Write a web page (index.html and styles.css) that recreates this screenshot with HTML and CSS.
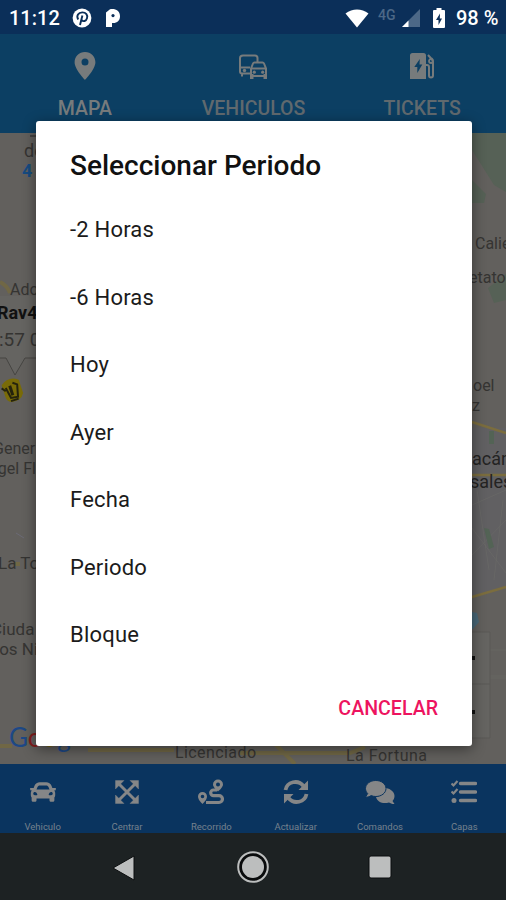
FILE: index.html
```html
<!DOCTYPE html>
<html lang="es">
<head>
<meta charset="utf-8">
<title>Mapa</title>
<link rel="stylesheet" href="styles.css">
</head>
<body>
<div class="screen">
  <header class="status">
    <div class="status-left">
      <span class="clock">11:12</span>
      <svg class="pin-logo" viewBox="0 0 20 20"><circle cx="10" cy="10" r="9.4" fill="#fff"/><path d="M6.2 11.5C4 7.8 6.4 4.4 10.3 4.4c3.7 0 5.7 2.8 4.7 5.8-.9 3-3.9 3.8-5.2 1.9M10.4 7.6 8 17" fill="none" stroke="#0b2f59" stroke-width="1.9"/></svg>
      <svg class="p-logo" viewBox="0 0 16 20"><path d="M1 4.500 5 1.300C10 .2 15 2.600 15 8.200c0 5-3.600 7.300-8 6.700v4.100H1z" fill="#fff"/><circle cx="8" cy="7.600" r="1.600" fill="#0b2f59"/></svg>
    </div>
    <div class="status-right">
      <svg class="wifi" viewBox="0 0 24 19"><path d="M.5 4.500C7.500-1 16.500-1 23.500 4.500L12 18.500z" fill="#fff"/></svg>
      <span class="net">4G</span>
      <svg class="signal" viewBox="0 0 18 18"><path d="M18 0v18H0z" fill="#4c6887"/><path d="M6.500 11.500V18H0z" fill="#fff"/></svg>
      <svg class="battery" viewBox="0 0 12 20"><path d="M3.500 0h5v2H11q1 0 1 1v16q0 1-1 1H1q-1 0-1-1V3q0-1 1-1h2.500z" fill="#fff"/><path d="M7 5.500 3 12h2.500v5L9 10.500H6.800z" fill="#0b2f59"/></svg>
      <span class="percent">98 %</span>
    </div>
  </header>

  <nav class="tabs">
    <div class="tab active">
      <svg viewBox="0 0 30 30"><path d="M15 1C9 1 4.600 5.500 4.600 11.300 4.600 18.500 15 29 15 29s10.400-10.500 10.400-17.700C25.400 5.500 21 1 15 1zm0 6.600a3.500 3.500 0 1 1 0 7 3.500 3.500 0 0 1 0-7z" fill="currentColor" fill-rule="evenodd"/></svg>
      <span>MAPA</span>
    </div>
    <div class="tab">
      <svg viewBox="0 0 30 30"><g fill="none" stroke="currentColor" stroke-width="2"><path d="M12 22.500H4q-2 0-2-2V7q0-2.500 3-2.500h12q2.500 0 2.500 2.500v4M2 16.500h10M4 23v2.500"/><path d="m13 17.500 2-5q.4-1 1.500-1h8q1.100 0 1.500 1l2 5v7.500H13zM13 17.500h15"/></g><g fill="currentColor"><circle cx="6.500" cy="19.500" r="1.700"/><circle cx="16.300" cy="21.200" r="1.600"/><circle cx="24.700" cy="21.200" r="1.600"/><path d="M12 23h3.500v5H12zm13.500 0H29v5h-3.500z"/></g></svg>
      <span>VEHICULOS</span>
    </div>
    <div class="tab">
      <svg viewBox="0 0 30 30"><path d="M5.500 2h11Q19 2 19 4.500V28H3V4.500Q3 2 5.500 2zM12.800 8 7.300 16h3v6l5-8.500h-2.800z" fill="currentColor" fill-rule="evenodd"/><path d="M19 14h1q2 0 2 2v8.500q0 2 2 2t2-2V11l-1.500-4M21 4l4.500 5" fill="none" stroke="currentColor" stroke-width="2"/><circle cx="24" cy="10" r="2" fill="none" stroke="currentColor" stroke-width="1.800"/></svg>
      <span>TICKETS</span>
    </div>
  </nav>

  <main class="map">
    <svg viewBox="0 133 506 631">
      <rect y="133" width="506" height="631" fill="#62605d"/>
      <path d="M472 133h34v59l-12-7-22-35z" fill="#566156"/>
      <path d="m472 180 14 14-2 9h-12zM488 288l18-14v26l-12 3z" fill="#566156"/>
      <path d="M472 428h34v158l-34 11z" fill="#616065" opacity=".6"/>
      <g stroke="#6d6d6a" fill="none" opacity=".5"><path d="m472 505 34-15M477 490l12 80M506 520l-34 35M503 500l-9 80M472 528l34 45M472 650h34M472 678h34M490 676h16"/></g>
      <path d="M489 431h5v13h-5zM484 528l5 1 5 18-5 2z" fill="#536355"/>
      <g fill="none" stroke="#7b6d3e" stroke-width="2.500"><path d="m472 422 34 11M472 475h34M472 597l34-10"/><path d="M0 282q7 3 10 11M14 564h6M88 750h86M240 753h110l15-6M275 744l20 20M0 746h12" stroke-width="4" stroke="#706745"/></g>
      <path d="m472 612 5 1 2 9-6 7h-1z" fill="#496878"/>
      <path d="m16 533 8 5" stroke="#6b6a75"/>
      <path d="M472 632h18v106h-18M472 684h18" fill="#656461" stroke="#5a5956"/>
      <path d="M472 656h3v4h-3zM472 710h3v4h-3z" fill="#111"/>
      <path d="M0 296h36v62H25l-10 17-9-17H0z" fill="#656461"/>
      <path d="M0 358h6l9 17 10-17h11" stroke="#464542" fill="none"/>
      <g class="labels">
        <path d="M30 136h6" stroke="#3b3a38" stroke-width="1.500"/>
        <text x="24" y="157" font-size="18">de</text>
        <text x="22" y="177" font-size="18" font-weight="700" fill="#174b80">4</text>
        <text x="10" y="295" font-size="16">Ado</text>
        <text x="-3" y="319" font-size="18" font-weight="700" fill="#111">Rav4</text>
        <text x="-1" y="346" font-size="19">:57 0</text>
        <text x="-7" y="454" font-size="16">Gener</text>
        <text x="-11" y="474" font-size="16">ngel Fl</text>
        <text x="-2" y="569" font-size="17">La To</text>
        <text x="-9" y="635" font-size="17">Ciuda</text>
        <text x="-10" y="655" font-size="17">Los Ni</text>
        <text x="475" y="249" font-size="16">Calie</text>
        <text x="469" y="283" font-size="16">etato</text>
        <text x="473" y="391" font-size="16">oel</text>
        <text x="472" y="411" font-size="16">z</text>
        <text x="472" y="465" font-size="18" fill="#242322">acán</text>
        <text x="470" y="488" font-size="18" fill="#242322">sales</text>
        <text x="175" y="758" font-size="16" textLength="81">Licenciado</text>
        <text x="346" y="761" font-size="16" textLength="81">La Fortuna</text>
      </g>
      <text x="9" y="747" font-size="26" class="google"><tspan fill="#1d4886">G</tspan><tspan fill="#821d1d">o</tspan><tspan fill="#776315">o</tspan><tspan fill="#1d4886">g</tspan></text>
      <g transform="rotate(-18 13 391)"><path d="M4 382q9-7 18 0v14q-4 7-14 5-4-2-4-7z" fill="#796b08"/><path d="m7 386 2 11 7 1 3-12-4-3M3 385l3 4M8 400h8" fill="none" stroke="#25230d" stroke-width="2"/><path d="M10 385h3v10h-3z" fill="#25230d"/></g>
    </svg>
  </main>

  <nav class="actions">
    <div class="action"><svg viewBox="0 0 512 512"><path fill="currentColor" d="M499.990 176h-59.870l-16.640-41.600C406.380 91.630 365.570 64 319.500 64h-127c-46.060 0-86.880 27.630-103.990 70.400L71.870 176H12.010C4.200 176-1.530 183.340.370 190.910l6 24C7.700 220.250 12.500 224 18.010 224h20.070C24.650 235.730 16 252.780 16 272v48c0 16.120 6.160 30.670 16 41.930V416c0 17.670 14.330 32 32 32h32c17.670 0 32-14.330 32-32v-32h256v32c0 17.670 14.330 32 32 32h32c17.670 0 32-14.330 32-32v-54.070c9.840-11.250 16-25.800 16-41.930v-48c0-19.220-8.650-36.270-22.070-48H494c5.510 0 10.310-3.750 11.640-9.090l6-24c1.890-7.570-3.840-14.910-11.650-14.910zM147.930 158.170c7.290-18.220 24.940-30.170 44.570-30.170h127c19.630 0 37.280 11.950 44.570 30.170L384 208H128zM96 319.800c-19.200 0-32-12.760-32-31.900S76.800 256 96 256s48 28.710 48 47.850-28.800 15.950-48 15.950zm320 0c-19.200 0-48 3.190-48-15.950S396.800 256 416 256s32 12.760 32 31.900-12.800 31.900-32 31.900z"/></svg><span>Vehiculo</span></div>
    <div class="action"><svg viewBox="0 0 26 26"><path d="m5 5 16 16M21 5 5 21" stroke="currentColor" stroke-width="3"/><path d="M1.500 1.500h8.500L1.500 10zM24.500 1.500V10L16 1.500zM1.500 24.500V16l8.500 8.500zM24.500 24.500H16l8.500-8.500z" fill="currentColor" stroke="currentColor" stroke-width=".4"/></svg><span>Centrar</span></div>
    <div class="action"><svg viewBox="0 0 26 26"><path d="M20 .5a5 5 0 0 0-5 5c0 3 5 7 5 7s5-4 5-7a5 5 0 0 0-5-5zm0 3a2 2 0 1 1 0 4 2 2 0 0 1 0-4zM4.500 13A4.500 4.500 0 0 0 0 17.500C0 21 4.500 25 4.500 25S9 21 9 17.500A4.500 4.500 0 0 0 4.500 13zm0 2.700a1.800 1.800 0 1 1 0 3.600 1.800 1.800 0 0 1 0-3.600z" fill="currentColor" fill-rule="evenodd"/><path d="M19 11h-3.500a2.800 2.800 0 0 0 0 5.600H21a3.200 3.200 0 0 1 0 6.900H8" fill="none" stroke="currentColor" stroke-width="3.200"/></svg><span>Recorrido</span></div>
    <div class="action"><svg viewBox="0 0 26 26"><path d="M2.500 11C4 2.500 15 .2 20.500 7M23.500 15C22 23.500 11 25.800 5.500 19" fill="none" stroke="currentColor" stroke-width="3.800"/><path d="M25 1.500V11h-9.500zM1 24.500V15h9.500z" fill="currentColor"/></svg><span>Actualizar</span></div>
    <div class="action"><svg class="wide" viewBox="0 0 30 26"><path d="M19 9h2c5 1 8.500 4 8.500 8 0 2-1 4-2 5l2 3c-2 .3-4-.6-5.500-1.500-6 1.700-12-.5-13-5.500q8-1 8-9z" fill="currentColor"/><path d="M10.800 1.500C16.500 1.500 21 5 21 9.500s-4.500 8-10.200 8c-1.700 0-3.100-.3-4.600-.9-1.600 1-3.700 1.900-5.700 1.500l2.200-3.600C1.300 13.200.5 11.400.5 9.500c0-4.500 4.600-8 10.300-8z" fill="currentColor" stroke="#0a345f"/></svg><span>Comandos</span></div>
    <div class="action"><svg viewBox="0 0 26 26"><path d="M9.500 4.500h15M9.500 13h15M9.500 21.500h15" stroke="currentColor" stroke-width="3.400" stroke-linecap="round"/><path d="m.5 4.500 2 2 4-4.500M.5 12.500l2 2 4-4.500" fill="none" stroke="currentColor" stroke-width="2.200"/><circle cx="3" cy="21.500" r="2.500" fill="currentColor"/></svg><span>Capas</span></div>
  </nav>

  <footer class="sysnav">
    <svg viewBox="0 0 36 36"><path d="M26 7v24L5 19z" fill="#bcbebe" stroke="#0b0d0e"/></svg>
    <svg viewBox="0 0 36 36"><circle cx="18" cy="18" r="14.800" fill="#090b0c" stroke="#bcbebe" stroke-width="2"/><circle cx="18" cy="18" r="11" fill="#bcbebe"/></svg>
    <svg viewBox="0 0 36 36"><rect x="7" y="7" width="22" height="22" rx="2" fill="#bcbebe" stroke="#0b0d0e"/></svg>
  </footer>

  <section class="dialog" role="dialog">
    <h1>Seleccionar Periodo</h1>
    <ul>
      <li>-2 Horas</li>
      <li>-6 Horas</li>
      <li>Hoy</li>
      <li>Ayer</li>
      <li>Fecha</li>
      <li>Periodo</li>
      <li>Bloque</li>
    </ul>
    <div class="buttons"><span class="cancel">CANCELAR</span></div>
  </section>
</div>
</body>
</html>
```
FILE: styles.css
```css
* { box-sizing: border-box; }
body { margin: 0; font-family: Roboto, "Liberation Sans", sans-serif; }
svg { display: block; flex: none; }
.screen {
  position: relative;
  display: flex;
  flex-direction: column;
  width: 506px;
  height: 900px;
  overflow: hidden;
}
.status {
  display: flex;
  justify-content: space-between;
  height: 34px;
  padding: 0 8px 0 9px;
  background: #0b2f59;
  color: #fff;
  font-size: 20px;
  font-weight: 500;
  line-height: 36px;
}
.status-left, .status-right { display: flex; align-items: center; height: 36px; }
.clock { width: 51px; }
.pin-logo { width: 20px; height: 20px; margin-left: 12px; }
.p-logo { width: 16px; height: 20px; margin-left: 13px; }
.wifi { width: 24px; height: 19px; }
.net { margin: -6px 0 0 9px; width: 19px; font-size: 14px; color: #4c6887; }
.signal { width: 18px; height: 18px; margin-left: 5px; }
.battery { width: 12px; height: 20px; margin-left: 13px; }
.percent { margin-left: 11px; width: 42px; white-space: nowrap; }
.tabs {
  display: grid;
  grid-template-columns: repeat(3, 1fr);
  height: 99px;
  background: #0c3f63;
}
.tab {
  display: flex;
  flex-direction: column;
  align-items: center;
  padding: 17px 0 0 1px;
  color: #60696e;
  font-size: 19.500px;
  font-weight: 500;
  line-height: 24px;
}
.tab svg { width: 30px; height: 30px; margin-bottom: 16px; color: #777b7c; }
.tab.active { color: #777b7c; }
.map { height: 631px; }
.map svg { width: 506px; height: 631px; }
.labels { fill: #353432; }
.google { font-family: Lato, sans-serif; }
.actions {
  display: grid;
  grid-template-columns: repeat(6, 1fr);
  height: 69px;
  background: #0a345f;
  color: #858687;
}
.action { display: flex; flex-direction: column; align-items: center; padding: 15px 0 0 1px; }
.action svg { width: 26px; height: 26px; }
.action svg.wide { width: 30px; }
.action span { margin-top: 16px; font-size: 9.500px; line-height: 12px; color: #75818d; }
.sysnav {
  display: grid;
  grid-template-columns: repeat(3, 127px);
  justify-content: center;
  justify-items: center;
  align-items: center;
  height: 67px;
  background: #1d2223;
}
.sysnav svg { width: 36px; height: 36px; }
.dialog {
  position: absolute;
  left: 36px;
  top: 121px;
  width: 436px;
  height: 625px;
  padding: 27px 34px;
  border-radius: 3px;
  background: #fff;
  box-shadow: 0 3px 14px rgba(0, 0, 0, .45);
}
h1 { margin: 0; font-size: 28px; line-height: 36px; font-weight: 500; white-space: nowrap; color: #111; }
ul { margin: 12px 0 0; padding: 0; list-style: none; }
li { height: 67.500px; line-height: 68px; font-size: 22px; letter-spacing: .2px; color: #1b1b1b; }
.buttons { display: flex; justify-content: flex-end; margin-top: 28px; }
.cancel { font-size: 19.600px; line-height: 24px; font-weight: 500; color: #ed145f; }
```
